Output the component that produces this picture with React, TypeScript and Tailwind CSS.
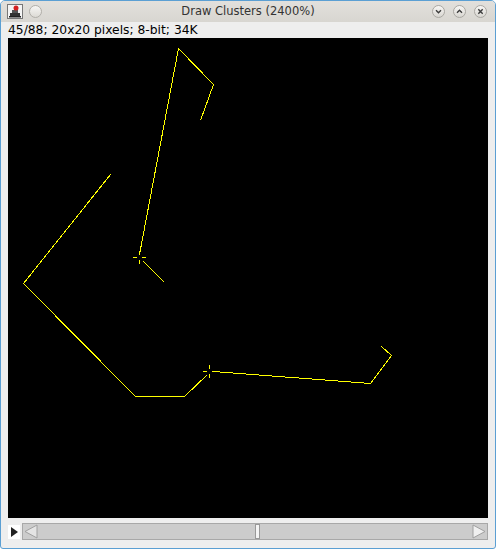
import React from 'react';

type Pt = [number, number];

const clusterA: Pt[][] = [
  [[170, 10], [205, 46], [192, 82]],
  [[170, 10], [131, 216]],
  [[135, 223], [156, 244]],
];

const clusterB: Pt[][] = [
  [[102, 136], [15, 245], [127, 358], [176, 358], [199, 336]],
  [[205, 333], [362, 345], [383, 317], [373, 308]],
];

const centers: Pt[] = [[131, 219], [201, 333]];

function Cross({ x, y }: { x: number; y: number }) {
  return (
    <g>
      <line x1={x - 6} y1={y + 0.5} x2={x - 2} y2={y + 0.5} />
      <line x1={x + 3} y1={y + 0.5} x2={x + 7} y2={y + 0.5} />
      <line x1={x + 0.5} y1={y - 6} x2={x + 0.5} y2={y - 2} />
      <line x1={x + 0.5} y1={y + 3} x2={x + 0.5} y2={y + 7} />
    </g>
  );
}

function TitleButton({ kind }: { kind: 'min' | 'max' | 'close' }) {
  return (
    <div className="flex h-[13px] w-[13px] items-center justify-center rounded-full border border-[#a9a7a2] bg-gradient-to-b from-[#f7f6f4] to-[#d8d6d1]">
      <svg width="9" height="9" viewBox="0 0 9 9" fill="none" stroke="#3c3c3c" strokeWidth="1.4">
        {kind === 'min' && <path d="M2 3.2 L4.5 5.7 L7 3.2" />}
        {kind === 'max' && <path d="M2 5.8 L4.5 3.3 L7 5.8" />}
        {kind === 'close' && <path d="M2.3 2.3 L6.7 6.7 M6.7 2.3 L2.3 6.7" />}
      </svg>
    </div>
  );
}

export default function App() {
  return (
    <div
      className="flex h-[549px] w-[496px] flex-col overflow-hidden rounded-t-[5px] rounded-b-[3px] border border-[#5b9fd3] bg-[#eeeeee]"
      style={{ fontFamily: '"DejaVu Sans", sans-serif' }}
    >
      {/* title bar */}
      <div className="relative flex h-[21px] items-center bg-gradient-to-b from-[#e2e0dc] to-[#d8d6d1] px-[6px]">
        <svg width="16" height="15" viewBox="0 0 16 15">
          <rect x="0.5" y="0.5" width="15" height="14" fill="#f4f4f4" stroke="#777" />
          <rect x="3" y="9" width="10" height="3" fill="#333" />
          <rect x="5" y="6" width="6" height="3" fill="#555" />
          <circle cx="9" cy="4" r="2.5" fill="#d42020" />
          <rect x="2" y="12" width="12" height="1.5" fill="#222" />
        </svg>
        <div className="ml-[6px] h-[13px] w-[13px] rounded-full border border-[#b0aea9] bg-gradient-to-b from-[#f7f6f4] to-[#dcdad5]" />
        <div className="absolute inset-0 flex items-center justify-center text-[11.5px] text-[#333]">
          Draw Clusters (2400%)
        </div>
        <div className="ml-auto flex items-center gap-[8px] pr-[2px]">
          <TitleButton kind="min" />
          <TitleButton kind="max" />
          <TitleButton kind="close" />
        </div>
      </div>

      {/* status line */}
      <div className="flex h-[16px] items-center px-[7px] pt-[1px] text-[12.3px] leading-none text-black">
        45/88; 20x20 pixels; 8-bit; 34K
      </div>

      {/* image canvas */}
      <div className="px-[7px]">
        <div className="h-[480px] w-[480px] bg-black">
          <svg width="480" height="480" viewBox="0 0 480 480" shapeRendering="crispEdges">
            <g fill="none" stroke="#ffff00" strokeWidth="1">
              {[...clusterA, ...clusterB].map((pts, i) => (
                <polyline key={i} points={pts.map(([x, y]) => `${x + 0.5},${y + 0.5}`).join(' ')} />
              ))}
              {centers.map(([x, y], i) => (
                <Cross key={i} x={x} y={y} />
              ))}
            </g>
          </svg>
        </div>
      </div>

      {/* slice scrollbar */}
      <div className="mt-[5px] flex items-center gap-[2px] px-[7px]">
        <div className="flex h-[14px] w-[12px] items-center justify-center bg-white">
          <svg width="8" height="10" viewBox="0 0 8 10">
            <path d="M1 0 L8 5 L1 10 Z" fill="#222" />
          </svg>
        </div>
        <div className="relative flex h-[17px] flex-1 items-center border border-[#a8a8a8] bg-[#cccccc]">
          <svg width="14" height="15" viewBox="0 0 14 15" className="ml-[1px]">
            <path d="M13 1 L1 7.5 L13 14 Z" fill="#e4e4e4" stroke="#a0a0a0" />
          </svg>
          <div className="absolute left-[232px] top-0 h-[15px] w-[5px] border border-[#999] bg-[#f4f4f4]" />
          <svg width="14" height="15" viewBox="0 0 14 15" className="ml-auto mr-[1px]">
            <path d="M1 1 L13 7.5 L1 14 Z" fill="#f0f0f0" stroke="#a0a0a0" />
          </svg>
        </div>
      </div>
    </div>
  );
}
